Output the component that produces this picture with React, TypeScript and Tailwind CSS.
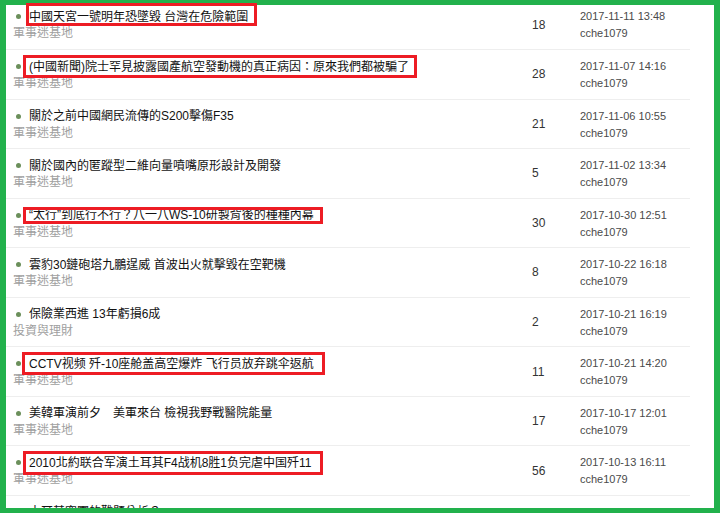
import React from "react";

type Row = { title: string; cat: string; count: string; date: string; user: string };

const rows: Row[] = [
  { title: "中國天宮一號明年恐墜毀 台灣在危險範圍", cat: "軍事迷基地", count: "18", date: "2017-11-11 13:48", user: "cche1079" },
  { title: "(中國新聞)院士罕見披露國產航空發動機的真正病因：原來我們都被騙了", cat: "軍事迷基地", count: "28", date: "2017-11-07 14:16", user: "cche1079" },
  { title: "關於之前中國網民流傳的S200擊傷F35", cat: "軍事迷基地", count: "21", date: "2017-11-06 10:55", user: "cche1079" },
  { title: "關於國內的匿蹤型二維向量噴嘴原形設計及開發", cat: "軍事迷基地", count: "5", date: "2017-11-02 13:34", user: "cche1079" },
  { title: "“太行”到底行不行？八一八WS-10研製背後的種種內幕", cat: "軍事迷基地", count: "30", date: "2017-10-30 12:51", user: "cche1079" },
  { title: "雲豹30鏈砲塔九鵬逞威 首波出火就擊毀在空靶機", cat: "軍事迷基地", count: "8", date: "2017-10-22 16:18", user: "cche1079" },
  { title: "保險業西進 13年虧損6成", cat: "投資與理財", count: "2", date: "2017-10-21 16:19", user: "cche1079" },
  { title: "CCTV视频 歼-10座舱盖高空爆炸 飞行员放弃跳伞返航", cat: "軍事迷基地", count: "11", date: "2017-10-21 14:20", user: "cche1079" },
  { title: "美韓軍演前夕　美軍來台 檢視我野戰醫院能量", cat: "軍事迷基地", count: "17", date: "2017-10-17 12:01", user: "cche1079" },
  { title: "2010北約联合军演土耳其F4战机8胜1负完虐中国歼11", cat: "軍事迷基地", count: "56", date: "2017-10-13 16:11", user: "cche1079" },
  { title: "土耳其空軍的難題分析？", cat: "軍事迷基地", count: "9", date: "2017-10-10 11:02", user: "cche1079" },
];

const boxes = [
  { l: "left-[26px]", t: "top-[3px]", w: "w-[231px]", h: "h-[23px]" },
  { l: "left-[23px]", t: "top-[55px]", w: "w-[394px]", h: "h-[23px]" },
  { l: "left-[23px]", t: "top-[207px]", w: "w-[300px]", h: "h-[17px]" },
  { l: "left-[22px]", t: "top-[352px]", w: "w-[303px]", h: "h-[23px]" },
  { l: "left-[23px]", t: "top-[451px]", w: "w-[300px]", h: "h-[24px]" },
];

export default function App() {
  return (
    <div
      className="relative w-[720px] h-[513px] bg-[#22b14c] pt-[5px] pl-[6px] pr-[6px] pb-[5px]"
      style={{ fontFamily: '"Liberation Sans", "Noto Sans CJK TC", sans-serif' }}
    >
      <div className="w-full h-full bg-white overflow-hidden">
        <div className="-mt-[4.56px] w-[684px]">
          {rows.map((r, i) => (
            <div
              key={i}
              className="h-[49.56px] border-b border-[#eeeeee] grid grid-cols-[519px_48px_1fr] pl-[7px] pt-[8px]"
            >
              <div className="flex flex-col">
                <div className="flex items-center h-[17px] text-[12px] text-[#111111] whitespace-nowrap">
                  <span className="ml-[3px] mr-[8px] w-[5px] h-[5px] rounded-full bg-[#6b8f5b] shrink-0" />
                  <span>{r.title}</span>
                </div>
                <div className="h-[17px] leading-[17px] text-[12px] text-[#a0a0a0] whitespace-nowrap">{r.cat}</div>
              </div>
              <div className="flex items-center -mt-[8px] text-[12px] text-[#333333]">{r.count}</div>
              <div className="flex flex-col text-[11px] text-[#4a4a4a]">
                <div className="h-[17px] leading-[17px]">{r.date}</div>
                <div className="h-[17px] leading-[17px]">{r.user}</div>
              </div>
            </div>
          ))}
        </div>
      </div>
      {boxes.map((b, i) => (
        <div key={i} className={`absolute border-[3px] border-[#ed1c24] ${b.l} ${b.t} ${b.w} ${b.h}`} />
      ))}
    </div>
  );
}
